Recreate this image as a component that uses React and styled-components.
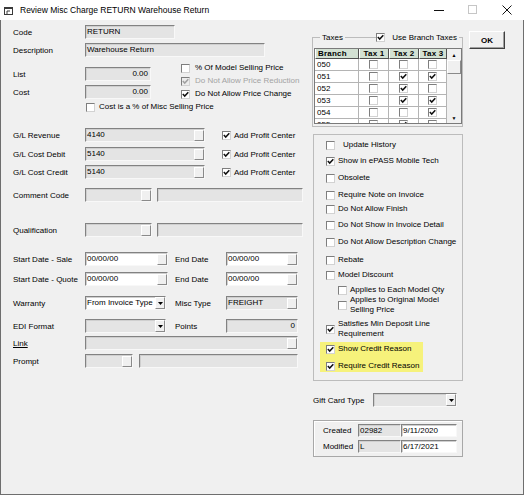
import React from 'react';
import styled, { createGlobalStyle } from 'styled-components';

const GlobalStyle = createGlobalStyle`
  html, body {
    margin: 0;
    padding: 0;
    background: #ffffff;
  }
  body {
    font-family: "Liberation Sans", Arial, sans-serif;
    font-size: 8px;
    color: #000;
  }
`;

const taxRows = [
  ['050', [0, 0, 0]],
  ['051', [0, 1, 1]],
  ['052', [0, 1, 0]],
  ['053', [0, 1, 1]],
  ['054', [0, 0, 1]],
  ['055', [0, 1, 0]],
];

function Tick({ on, disabled }) {
  return (
    <CheckBox $disabled={disabled}>
      {on && (
        <svg width="7" height="7" viewBox="0 0 7 7">
          <path
            d="M0.8 3.1 L2.7 5.1 L6.3 1.2"
            fill="none"
            stroke={disabled ? '#a0a0a0' : '#111'}
            strokeWidth="1.5"
          />
        </svg>
      )}
    </CheckBox>
  );
}

function Arrow() {
  return (
    <svg width="5" height="3" viewBox="0 0 5 3">
      <path d="M0 0 L5 0 L2.5 3 Z" fill="#000" />
    </svg>
  );
}

export default function App() {
  return (
    <>
      <GlobalStyle />
      <Window>
        <TitleBar>
          <svg width="11" height="11" viewBox="0 0 11 11">
            <rect x="1.5" y="2.5" width="8" height="7" fill="none" stroke="#3a3a3a" />
            <rect x="1" y="2" width="9" height="2" fill="#3a3a3a" />
            <path d="M4 9 L4 6 L7 6" fill="none" stroke="#3a3a3a" />
          </svg>
          <Title>Review Misc Charge RETURN Warehouse Return</Title>
          <WinButtons>
            <WinButton>
              <svg width="10" height="10" viewBox="0 0 10 10">
                <path d="M0 5.5 H10" stroke="#111" />
              </svg>
            </WinButton>
            <WinButton>
              <svg width="10" height="10" viewBox="0 0 10 10">
                <rect x="0.5" y="0.5" width="8" height="8" fill="none" stroke="#c6c6c6" />
              </svg>
            </WinButton>
            <WinButton>
              <svg width="10" height="10" viewBox="0 0 10 10">
                <path d="M0.5 0.5 L9.5 9.5 M9.5 0.5 L0.5 9.5" stroke="#111" />
              </svg>
            </WinButton>
          </WinButtons>
        </TitleBar>

        <Body>
          <LeftPane>
            <Row $mt={5}>
              <Label>Code</Label>
              <Field $w={90}><FieldText>RETURN</FieldText></Field>
            </Row>
            <Row $mt={4}>
              <Label>Description</Label>
              <Field $w={180}><FieldText>Warehouse Return</FieldText></Field>
            </Row>

            <PriceBlock>
              <PriceFields>
                <Row>
                  <Label>List</Label>
                  <Field $w={66}><FieldText $right>0.00</FieldText></Field>
                </Row>
                <Row $mt={4}>
                  <Label>Cost</Label>
                  <Field $w={66}><FieldText $right>0.00</FieldText></Field>
                </Row>
              </PriceFields>
              <CheckStack>
                <CheckRow>
                  <Tick />
                  <CheckText $gap={5}>% Of Model Selling Price</CheckText>
                </CheckRow>
                <CheckRow $mt={3}>
                  <Tick on disabled />
                  <CheckText $gap={5} $disabled>Do Not Allow Price Reduction</CheckText>
                </CheckRow>
                <CheckRow $mt={3}>
                  <Tick on />
                  <CheckText $gap={5}>Do Not Allow Price Change</CheckText>
                </CheckRow>
              </CheckStack>
            </PriceBlock>

            <CheckRow $mt={3} $indent={73}>
              <Tick />
              <CheckText $gap={4}>Cost is a % of Misc Selling Price</CheckText>
            </CheckRow>

            <Row $mt={16}>
              <Label>G/L Revenue</Label>
              <Field $w={120}><FieldText>4140</FieldText><LookupBtn /></Field>
              <ProfitCheck><Tick on /><CheckText $gap={3}>Add Profit Center</CheckText></ProfitCheck>
            </Row>
            <Row $mt={5}>
              <Label>G/L Cost Debit</Label>
              <Field $w={120}><FieldText>5140</FieldText><LookupBtn /></Field>
              <ProfitCheck><Tick on /><CheckText $gap={3}>Add Profit Center</CheckText></ProfitCheck>
            </Row>
            <Row $mt={4}>
              <Label>G/L Cost Credit</Label>
              <Field $w={120}><FieldText>5140</FieldText><LookupBtn /></Field>
              <ProfitCheck><Tick on /><CheckText $gap={3}>Add Profit Center</CheckText></ProfitCheck>
            </Row>

            <Row $mt={9}>
              <Label>Comment Code</Label>
              <Field $w={67}><FieldText /><LookupBtn /></Field>
              <Field $w={146} $ml={5}><FieldText /></Field>
            </Row>
            <Row $mt={21}>
              <Label>Qualification</Label>
              <Field $w={67}><FieldText /><LookupBtn /></Field>
              <Field $w={146} $ml={5}><FieldText /></Field>
            </Row>

            <Row $mt={15}>
              <Label>Start Date - Sale</Label>
              <Slot>
                <Field $w={83} $white><FieldText>00/00/00</FieldText><LookupBtn /></Field>
              </Slot>
              <SubLabel>End Date</SubLabel>
              <Field $w={72} $white><FieldText>00/00/00</FieldText><LookupBtn /></Field>
            </Row>
            <Row $mt={6}>
              <Label>Start Date - Quote</Label>
              <Slot>
                <Field $w={83} $white><FieldText>00/00/00</FieldText><LookupBtn /></Field>
              </Slot>
              <SubLabel>End Date</SubLabel>
              <Field $w={72} $white><FieldText>00/00/00</FieldText><LookupBtn /></Field>
            </Row>
            <Row $mt={10}>
              <Label>Warranty</Label>
              <Slot>
                <Field $w={81} $white><FieldText>From Invoice Type</FieldText><DropBtn><Arrow /></DropBtn></Field>
              </Slot>
              <SubLabel>Misc Type</SubLabel>
              <Field $w={72}><FieldText>FREIGHT</FieldText><LookupBtn /></Field>
            </Row>
            <Row $mt={9}>
              <Label>EDI Format</Label>
              <Slot>
                <Field $w={81}><FieldText /><DropBtn><Arrow /></DropBtn></Field>
              </Slot>
              <SubLabel>Points</SubLabel>
              <Field $w={72}><FieldText $right>0</FieldText></Field>
            </Row>
            <Row $mt={3}>
              <Label $link>Link</Label>
              <Field $w={213}><FieldText /><LookupBtn /></Field>
            </Row>
            <Row $mt={4}>
              <Label>Prompt</Label>
              <Field $w={48}><FieldText /><LookupBtn /></Field>
              <Field $w={159} $ml={6}><FieldText /></Field>
            </Row>
          </LeftPane>

          <RightPane>
            <TaxGroup>
              <TaxLegend>
                <LegendLine $w={7} />
                <LegendText>Taxes</LegendText>
                <LegendLine $grow />
                <Tick on />
                <LegendText $ml={5}>Use Branch Taxes</LegendText>
                <LegendLine $w={3} />
              </TaxLegend>
              <GridBox>
                <TaxGrid>
                  <HeadCell $left>Branch</HeadCell>
                  <HeadCell>Tax 1</HeadCell>
                  <HeadCell>Tax 2</HeadCell>
                  <HeadCell>Tax 3</HeadCell>
                  {taxRows.map(([branch, taxes]) => (
                    <React.Fragment key={branch}>
                      <Cell $left>{branch}</Cell>
                      {taxes.map((t, i) => (
                        <Cell key={i}><Tick on={!!t} /></Cell>
                      ))}
                    </React.Fragment>
                  ))}
                </TaxGrid>
                <ScrollBar>
                  <ScrollBtn>▲</ScrollBtn>
                  <ScrollThumb />
                  <ScrollTrack />
                  <ScrollBtn>▼</ScrollBtn>
                </ScrollBar>
              </GridBox>
            </TaxGroup>

            <OptionGroup>
              <CheckRow>
                <Tick />
                <CheckText $gap={8}>Update History</CheckText>
              </CheckRow>
              <CheckRow $mt={6}><Tick on /><CheckText>Show in ePASS Mobile Tech</CheckText></CheckRow>
              <CheckRow $mt={7}><Tick /><CheckText>Obsolete</CheckText></CheckRow>
              <CheckRow $mt={7}><Tick /><CheckText>Require Note on Invoice</CheckText></CheckRow>
              <CheckRow $mt={4}><Tick /><CheckText>Do Not Allow Finish</CheckText></CheckRow>
              <CheckRow $mt={6}><Tick /><CheckText>Do Not Show in Invoice Detail</CheckText></CheckRow>
              <CheckRow $mt={7}><Tick /><CheckText>Do Not Allow Description Change</CheckText></CheckRow>
              <CheckRow $mt={8}><Tick /><CheckText>Rebate</CheckText></CheckRow>
              <CheckRow $mt={5}><Tick /><CheckText>Model Discount</CheckText></CheckRow>
              <CheckRow $mt={5} $indent={12}><Tick /><CheckText>Applies to Each Model Qty</CheckText></CheckRow>
              <CheckRow $indent={12}>
                <Tick />
                <CheckText>Applies to Original Model<br />Selling Price</CheckText>
              </CheckRow>
              <CheckRow $mt={4}>
                <Tick on />
                <CheckText>Satisfies Min Deposit Line<br />Requirement</CheckText>
              </CheckRow>
              <Highlight>
                <CheckRow><Tick on /><CheckText>Show Credit Reason</CheckText></CheckRow>
                <CheckRow $mt={7}><Tick on /><CheckText>Require Credit Reason</CheckText></CheckRow>
              </Highlight>
            </OptionGroup>

            <GiftRow>
              <GiftLabel>Gift Card Type</GiftLabel>
              <Field $w={84}><FieldText /><DropBtn><Arrow /></DropBtn></Field>
            </GiftRow>

            <StampBox>
              <StampRow>
                <StampLabel>Created</StampLabel>
                <Field $w={43} $h={13}><FieldText>02982</FieldText></Field>
                <Field $w={56} $h={13} $white><FieldText>9/11/2020</FieldText></Field>
              </StampRow>
              <StampRow $mt={3}>
                <StampLabel>Modified</StampLabel>
                <Field $w={43} $h={13}><FieldText>L</FieldText></Field>
                <Field $w={56} $h={13} $white><FieldText>6/17/2021</FieldText></Field>
              </StampRow>
            </StampBox>
          </RightPane>

          <ButtonPane>
            <OkButton>OK</OkButton>
          </ButtonPane>
        </Body>
      </Window>
    </>
  );
}

const Window = styled.div`
  box-sizing: border-box;
  width: 524px;
  height: 495px;
  display: flex;
  flex-direction: column;
  background: #f0f0f0;
  border: 1px solid #6e6e6e;
  border-top: none;
`;

const TitleBar = styled.div`
  height: 20px;
  flex-shrink: 0;
  display: flex;
  align-items: center;
  background: #ffffff;
  padding-left: 3px;
  margin: 0 -1px;

  svg {
    display: block;
  }
`;

const Title = styled.span`
  margin-left: 6px;
  font-size: 8.5px;
  color: #000;
  white-space: nowrap;
`;

const WinButtons = styled.div`
  margin-left: auto;
  display: flex;
  height: 100%;
`;

const WinButton = styled.div`
  width: 34px;
  display: flex;
  align-items: center;
  justify-content: center;
`;

const Body = styled.div`
  flex: 1;
  display: flex;
  align-items: flex-start;
`;

const LeftPane = styled.div`
  box-sizing: border-box;
  width: 311px;
  padding-left: 12px;
  display: flex;
  flex-direction: column;
`;

const Row = styled.div`
  display: flex;
  align-items: center;
  height: 14px;
  margin-top: ${(p) => p.$mt || 0}px;
`;

const Label = styled.span`
  width: 72px;
  flex-shrink: 0;
  white-space: nowrap;
  text-decoration: ${(p) => (p.$link ? 'underline' : 'none')};
`;

const SubLabel = styled.span`
  width: 51px;
  flex-shrink: 0;
  white-space: nowrap;
`;

const Slot = styled.div`
  width: 90px;
  flex-shrink: 0;
`;

const Field = styled.div`
  box-sizing: border-box;
  flex-shrink: 0;
  width: ${(p) => p.$w}px;
  height: ${(p) => p.$h || 14}px;
  margin-left: ${(p) => p.$ml || 0}px;
  display: flex;
  background: ${(p) => (p.$white ? '#ffffff' : '#e4e4e4')};
  border: 1px solid;
  border-color: #828282 #f8f8f8 #f8f8f8 #828282;
  box-shadow: inset 1px 1px 0 #cfcfcf;
`;

const FieldText = styled.span`
  flex: 1;
  min-width: 0;
  padding: 0 2px 0 1px;
  line-height: 12px;
  white-space: nowrap;
  overflow: hidden;
  text-align: ${(p) => (p.$right ? 'right' : 'left')};
`;

const LookupBtn = styled.span`
  box-sizing: border-box;
  width: 10px;
  margin: 1px 0 0;
  background: #f0f0f0;
  border: 1px solid;
  border-color: #ffffff #8a8a8a #8a8a8a #ffffff;
`;

const DropBtn = styled(LookupBtn)`
  display: flex;
  align-items: center;
  justify-content: center;
  margin: 0;
`;

const PriceBlock = styled.div`
  display: flex;
  align-items: flex-start;
  margin-top: 6px;
`;

const PriceFields = styled.div`
  display: flex;
  flex-direction: column;
  padding-top: 4px;
  width: 138px;
`;

const CheckStack = styled.div`
  display: flex;
  flex-direction: column;
  margin-left: 30px;
`;

const CheckRow = styled.div`
  display: flex;
  align-items: center;
  min-height: 10px;
  line-height: 10px;
  margin-top: ${(p) => p.$mt || 0}px;
  margin-left: ${(p) => p.$indent || 0}px;
`;

const ProfitCheck = styled.div`
  display: flex;
  align-items: center;
  margin-left: 17px;
`;

const CheckBox = styled.span`
  box-sizing: border-box;
  flex-shrink: 0;
  width: 9px;
  height: 9px;
  display: inline-flex;
  align-items: center;
  justify-content: center;
  background: ${(p) => (p.$disabled ? '#ececec' : '#ffffff')};
  border: 1px solid;
  border-color: #7e7e7e #d2d2d2 #d2d2d2 #7e7e7e;

  svg {
    display: block;
  }
`;

const CheckText = styled.span`
  margin-left: ${(p) => p.$gap ?? 3}px;
  color: ${(p) => (p.$disabled ? '#a3a3a3' : '#000')};
  white-space: nowrap;
`;

const RightPane = styled.div`
  width: 151px;
  flex-shrink: 0;
  display: flex;
  flex-direction: column;
`;

const TaxGroup = styled.fieldset`
  margin: 12px 0 0;
  padding: 0 0 2px;
  min-inline-size: 0;
  border: 1px solid #bcbcbc;
`;

const TaxLegend = styled.legend`
  box-sizing: border-box;
  width: 100%;
  padding: 0;
  height: 11px;
  display: flex;
  align-items: center;
`;

const LegendLine = styled.span`
  height: 1px;
  background: #bcbcbc;
  width: ${(p) => (p.$grow ? 'auto' : `${p.$w}px`)};
  flex: ${(p) => (p.$grow ? 1 : 'none')};
`;

const LegendText = styled.span`
  padding: 0 2px;
  margin-left: ${(p) => p.$ml || 0}px;
  white-space: nowrap;
`;

const GridBox = styled.div`
  box-sizing: border-box;
  display: flex;
  height: 76px;
  margin: 5px 0 0 1px;
  border: 1px solid #7a7a7a;
  background: #ffffff;
  overflow: hidden;
`;

const TaxGrid = styled.div`
  display: grid;
  grid-template-columns: 44px 30px 30px 28px;
  grid-auto-rows: 12px;
  grid-template-rows: 10px;
  align-content: start;
`;

const HeadCell = styled.div`
  box-sizing: border-box;
  display: flex;
  align-items: center;
  justify-content: ${(p) => (p.$left ? 'flex-start' : 'center')};
  padding-left: ${(p) => (p.$left ? 2 : 0)}px;
  background: #d3e1d3;
  border-right: 1px solid #505050;
  border-bottom: 1px solid #505050;
  border-left: 1px solid #ffffff;
  font-weight: bold;
  font-size: 8px;
  letter-spacing: 0.2px;
  white-space: nowrap;
`;

const Cell = styled.div`
  box-sizing: border-box;
  display: flex;
  align-items: center;
  justify-content: ${(p) => (p.$left ? 'flex-start' : 'center')};
  padding-left: ${(p) => (p.$left ? 2 : 0)}px;
  border-right: 1px solid #b4b4b4;
  border-bottom: 1px solid #b4b4b4;
`;

const ScrollBar = styled.div`
  width: 14px;
  flex-shrink: 0;
  display: flex;
  flex-direction: column;
  background: #f0f0f0;
`;

const ScrollBtn = styled.div`
  height: 11px;
  display: flex;
  align-items: center;
  justify-content: center;
  font-size: 5px;
  color: #000;
`;

const ScrollThumb = styled.div`
  box-sizing: border-box;
  height: 14px;
  background: #f0f0f0;
  border: 1px solid;
  border-color: #ffffff #8a8a8a #8a8a8a #ffffff;
`;

const ScrollTrack = styled.div`
  flex: 1;
`;

const OptionGroup = styled.div`
  box-sizing: border-box;
  margin-top: 7px;
  margin-left: 1px;
  padding: 5px 0 8px 12px;
  border: 1px solid #bcbcbc;
  display: flex;
  flex-direction: column;
  align-items: flex-start;
`;

const Highlight = styled.div`
  box-sizing: border-box;
  width: 103px;
  margin: 3px 0 0 -6px;
  padding: 2px 0 1px 6px;
  background: #f6f27b;
`;

const GiftRow = styled.div`
  display: flex;
  align-items: center;
  height: 14px;
  margin-top: 12px;
  padding-left: 1px;
`;

const GiftLabel = styled.span`
  width: 60px;
  white-space: nowrap;
`;

const StampBox = styled.div`
  box-sizing: border-box;
  margin: 13px 0 0 1px;
  width: 150px;
  padding: 3px 5px 3px 9px;
  border: 1px solid #a8a8a8;
  box-shadow: inset 1px 1px 0 #ffffff;
`;

const StampRow = styled.div`
  display: flex;
  align-items: center;
  margin-top: ${(p) => p.$mt || 0}px;
`;

const StampLabel = styled.span`
  width: 35px;
  white-space: nowrap;
`;

const ButtonPane = styled.div`
  padding: 11px 0 0 6px;
`;

const OkButton = styled.button`
  box-sizing: border-box;
  width: 36px;
  height: 18px;
  padding: 0;
  font-family: "Liberation Sans", Arial, sans-serif;
  font-size: 8px;
  font-weight: bold;
  color: #000;
  background: #f0f0f0;
  border: 1px solid;
  border-color: #ffffff #404040 #404040 #ffffff;
  box-shadow: inset -1px -1px 0 #a0a0a0;
`;
